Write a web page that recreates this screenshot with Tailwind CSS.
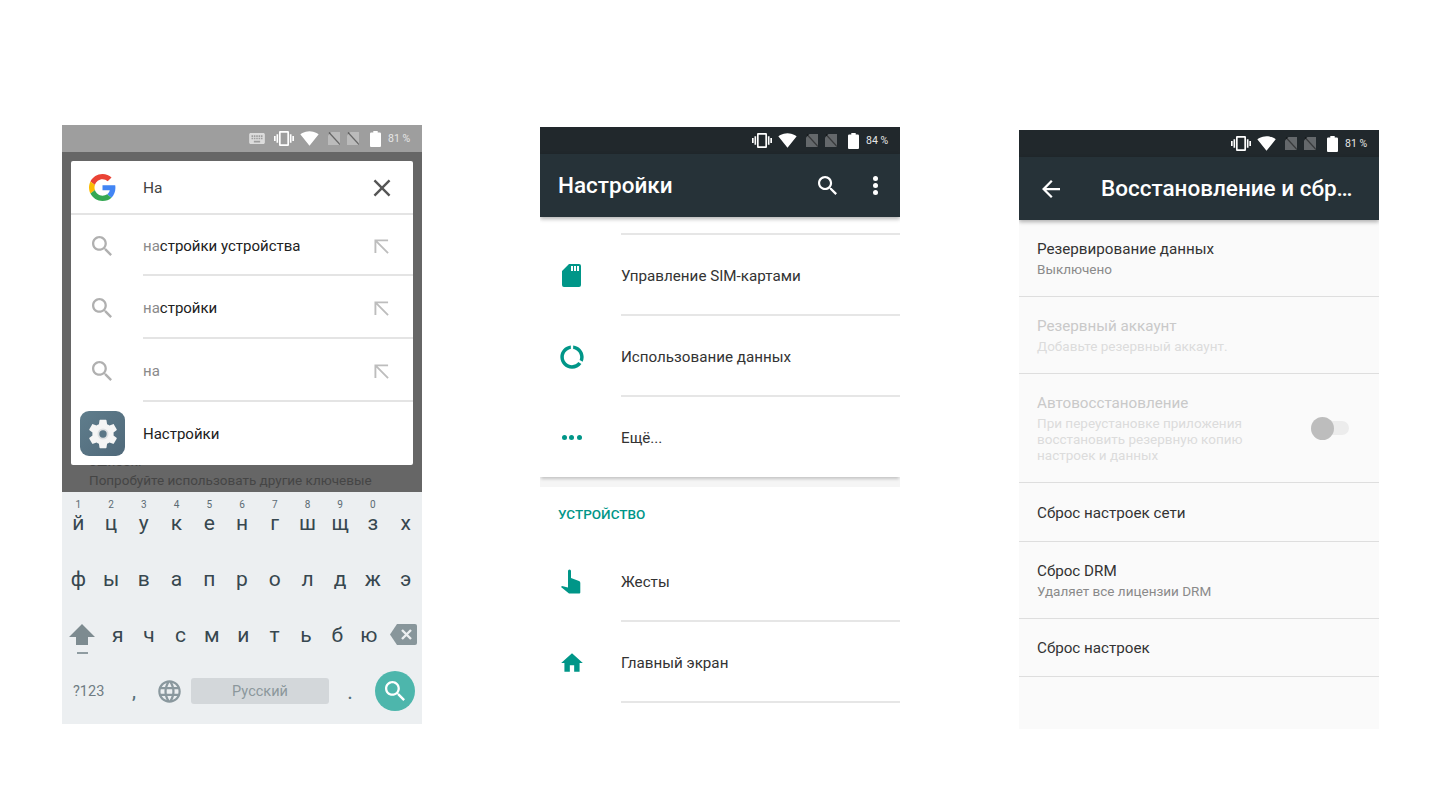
<!DOCTYPE html>
<html lang="ru">
<head>
  <meta charset="UTF-8">
  <title>Настройки</title>
  <script src="https://cdn.jsdelivr.net/npm/@tailwindcss/browser@4"></script>
</head>
<body class="bg-white font-['Roboto',sans-serif] overflow-hidden">
  <!-- shared icons -->
  <svg class="hidden">
    <symbol id="vib" viewBox="0 3 24 18"><path d="M0 15h2V9H0v6zm3 2h2V7H3v10zm19-8v6h2V9h-2zm-3 8h2V7h-2v10zM16.5 3h-9C6.67 3 6 3.67 6 4.5v15c0 .83.67 1.5 1.5 1.5h9c.83 0 1.5-.67 1.5-1.5v-15c0-.83-.67-1.5-1.5-1.5zM16 19H8V5h8v14z"/></symbol>
    <symbol id="wifi" viewBox="0 3 24 18.5"><path d="M12.01 21.49L23.64 7c-.45-.34-4.93-4-11.64-4C5.28 3 .81 6.66.36 7l11.63 14.49.01.01.01-.01z"/></symbol>
    <symbol id="nosim" viewBox="0 0 12 13"><path d="M3.5 0H12V13H0V3.5z" fill-opacity=".3"/><path d="M1 0.5L12 12.5" stroke="#000" stroke-opacity=".45" stroke-width="1.2" fill="none"/></symbol>
    <symbol id="batt" viewBox="7 2 10 20" preserveAspectRatio="none"><path d="M15.67 4H14V2h-4v2H8.33C7.6 4 7 4.6 7 5.33v15.33C7 21.4 7.6 22 8.33 22h7.33c.74 0 1.34-.6 1.34-1.33V5.33C17 4.6 16.4 4 15.67 4z"/></symbol>
    <symbol id="search" viewBox="3 3 17.5 17.5"><path d="M15.5 14h-.79l-.28-.27C15.41 12.59 16 11.11 16 9.5 16 5.91 13.09 3 9.5 3S3 5.91 3 9.5 5.91 16 9.5 16c1.61 0 3.09-.59 4.23-1.57l.27.28v.79l5 4.99L20.49 19l-4.99-5zm-6 0C7.01 14 5 11.99 5 9.5S7.01 5 9.5 5 14 7.01 14 9.5 11.99 14 9.5 14z"/></symbol>
    <symbol id="nw" viewBox="0 0 16 16"><path d="M1.5 15V1.5H15M1.5 1.5L15 15" fill="none" stroke="currentColor" stroke-width="2"/></symbol>
  </svg>

  <div class="flex items-start pl-[62px]">

    <!-- phone 1: search -->
    <div class="w-[360px] h-[599px] mt-[125px] flex flex-col shrink-0 overflow-hidden">
      <div class="h-[27px] shrink-0 bg-[#9e9e9e] flex items-center justify-end pr-3 text-[#e6e6e6] fill-white">
        <svg class="w-4 h-[11px] fill-[#dcdcdc]" viewBox="2 5 20 14"><path d="M20 5H4c-1.1 0-1.99.9-1.99 2L2 17c0 1.1.9 2 2 2h16c1.1 0 2-.9 2-2V7c0-1.1-.9-2-2-2zm-9 3h2v2h-2V8zm0 3h2v2h-2v-2zM8 8h2v2H8V8zm0 3h2v2H8v-2zm-1 2H5v-2h2v2zm0-3H5V8h2v2zm9 7H8v-2h8v2zm0-4h-2v-2h2v2zm0-3h-2V8h2v2zm3 3h-2v-2h2v2zm0-3h-2V8h2v2z"/></svg>
        <svg class="w-5 h-[15px] ml-[9px]"><use href="#vib"/></svg>
        <svg class="w-[19px] h-[15px] ml-1.5"><use href="#wifi"/></svg>
        <svg class="w-3 h-[13px] ml-[9px]"><use href="#nosim"/></svg>
        <svg class="w-3 h-[13px] ml-[7px]"><use href="#nosim"/></svg>
        <svg class="w-[11px] h-4 ml-[11px]"><use href="#batt"/></svg>
        <span class="ml-[7px] text-[10.5px] w-[22px] whitespace-nowrap">81 %</span>
      </div>

      <div class="h-[340px] shrink-0 bg-[#666666] pt-[9px] overflow-hidden">
        <div class="relative z-10 w-[342px] h-[304px] ml-[9px] bg-white rounded-[2px] flex flex-col text-[15px] text-[#212121]">
          <div class="h-[54px] shrink-0 flex items-center border-b-2 border-[#e4e4e4]">
            <svg class="w-[27px] h-[27px] ml-[18px]" viewBox="0 0 48 48">
              <path fill="#EA4335" d="M24 9.5c3.54 0 6.71 1.22 9.21 3.6l6.85-6.85C35.9 2.38 30.47 0 24 0 14.62 0 6.51 5.38 2.56 13.22l7.98 6.19C12.43 13.72 17.74 9.5 24 9.5z"/>
              <path fill="#4285F4" d="M46.98 24.55c0-1.57-.15-3.09-.38-4.55H24v9.02h12.94c-.58 2.96-2.26 5.48-4.78 7.18l7.73 6c4.51-4.18 7.09-10.36 7.09-17.65z"/>
              <path fill="#FBBC05" d="M10.53 28.59c-.48-1.45-.76-2.99-.76-4.59s.27-3.14.76-4.59l-7.98-6.19C.92 16.46 0 20.12 0 24c0 3.88.92 7.54 2.56 10.78l7.97-6.19z"/>
              <path fill="#34A853" d="M24 48c6.48 0 11.93-2.13 15.89-5.81l-7.73-6c-2.15 1.45-4.92 2.3-8.16 2.3-6.26 0-11.57-4.22-13.47-9.91l-7.98 6.19C6.51 42.62 14.62 48 24 48z"/>
            </svg>
            <span class="ml-[27px] flex-1 pt-[3px] text-[15.5px] text-[#424242]">На</span>
            <svg class="w-6 h-6 mr-[19px] mt-0.5 fill-[#555555]" viewBox="2 2 20 20"><path d="M19 6.41L17.59 5 12 10.59 6.41 5 5 6.41 10.59 12 5 17.59 6.41 19 12 13.41 17.59 19 19 17.59 13.41 12z"/></svg>
          </div>
          <div class="h-[61px] shrink-0 flex items-center">
            <svg class="w-5 h-5 ml-[21px] fill-[#b0b0b0]"><use href="#search"/></svg>
            <div class="ml-[31px] flex-1 h-full pt-[3px] flex items-center justify-between border-b-2 border-[#e4e4e4] pr-6">
              <span><span class="text-[#8a8a8a]">на</span>стройки устройства</span>
              <svg class="w-[15px] h-[15px] text-[#bdbdbd]"><use href="#nw"/></svg>
            </div>
          </div>
          <div class="h-[63px] shrink-0 flex items-center">
            <svg class="w-5 h-5 ml-[21px] fill-[#b0b0b0]"><use href="#search"/></svg>
            <div class="ml-[31px] flex-1 h-full pt-[3px] flex items-center justify-between border-b-2 border-[#e4e4e4] pr-6">
              <span><span class="text-[#8a8a8a]">на</span>стройки</span>
              <svg class="w-[15px] h-[15px] text-[#bdbdbd]"><use href="#nw"/></svg>
            </div>
          </div>
          <div class="h-[63px] shrink-0 flex items-center">
            <svg class="w-5 h-5 ml-[21px] fill-[#b0b0b0]"><use href="#search"/></svg>
            <div class="ml-[31px] flex-1 h-full pt-[3px] flex items-center justify-between border-b-2 border-[#e4e4e4] pr-6">
              <span class="text-[#8a8a8a]">на</span>
              <svg class="w-[15px] h-[15px] text-[#bdbdbd]"><use href="#nw"/></svg>
            </div>
          </div>
          <div class="h-[63px] shrink-0 flex items-center">
            <div class="w-[45px] h-[45px] ml-[9px] rounded-[9px] bg-gradient-to-br from-[#5f7d8c] to-[#50697a] flex items-center justify-center">
              <svg class="w-[34px] h-[34px]" viewBox="0 0 24 24"><path fill="#f5f5f5" d="M19.43 12.98c.04-.32.07-.64.07-.98s-.03-.66-.07-.98l2.11-1.65c.19-.15.24-.42.12-.64l-2-3.46c-.12-.22-.39-.3-.61-.22l-2.49 1c-.52-.4-1.08-.73-1.69-.98l-.38-2.65C14.46 2.18 14.25 2 14 2h-4c-.25 0-.46.18-.49.42l-.38 2.65c-.61.25-1.17.59-1.69.98l-2.49-1c-.23-.09-.49 0-.61.22l-2 3.46c-.13.22-.07.49.12.64l2.11 1.65c-.04.32-.07.65-.07.98s.03.66.07.98l-2.11 1.65c-.19.15-.24.42-.12.64l2 3.46c.12.22.39.3.61.22l2.49-1c.52.4 1.08.73 1.69.98l.38 2.65c.03.24.24.42.49.42h4c.25 0 .46-.18.49-.42l.38-2.65c.61-.25 1.17-.59 1.69-.98l2.49 1c.23.09.49 0 .61-.22l2-3.46c.12-.22.07-.49-.12-.64l-2.11-1.65z"/><circle cx="12" cy="12" r="3.9" fill="#dcdfe1"/><circle cx="12" cy="12" r="2.6" fill="#5a7686"/></svg>
            </div>
            <span class="ml-[18px] pt-0.5">Настройки</span>
          </div>
        </div>
        <div class="-mt-[13px] pl-[27px] text-[13.5px] leading-[19px] text-[#454545]">
          <div>ошибок.</div>
          <div>Попробуйте использовать другие ключевые</div>
        </div>
      </div>

      <!-- keyboard -->
      <div class="flex-1 bg-[#eceff1] text-[#37474f] text-[21px]">
        <div class="h-[59px] pt-[7px] grid grid-cols-11 text-center">
          <div class="flex flex-col"><span class="text-[10px] leading-3 text-[#5b6b73]">1</span><span class="leading-6">й</span></div>
          <div class="flex flex-col"><span class="text-[10px] leading-3 text-[#5b6b73]">2</span><span class="leading-6">ц</span></div>
          <div class="flex flex-col"><span class="text-[10px] leading-3 text-[#5b6b73]">3</span><span class="leading-6">у</span></div>
          <div class="flex flex-col"><span class="text-[10px] leading-3 text-[#5b6b73]">4</span><span class="leading-6">к</span></div>
          <div class="flex flex-col"><span class="text-[10px] leading-3 text-[#5b6b73]">5</span><span class="leading-6">е</span></div>
          <div class="flex flex-col"><span class="text-[10px] leading-3 text-[#5b6b73]">6</span><span class="leading-6">н</span></div>
          <div class="flex flex-col"><span class="text-[10px] leading-3 text-[#5b6b73]">7</span><span class="leading-6">г</span></div>
          <div class="flex flex-col"><span class="text-[10px] leading-3 text-[#5b6b73]">8</span><span class="leading-6">ш</span></div>
          <div class="flex flex-col"><span class="text-[10px] leading-3 text-[#5b6b73]">9</span><span class="leading-6">щ</span></div>
          <div class="flex flex-col"><span class="text-[10px] leading-3 text-[#5b6b73]">0</span><span class="leading-6">з</span></div>
          <div class="flex flex-col"><span class="text-[10px] leading-3">&nbsp;</span><span class="leading-6">х</span></div>
        </div>
        <div class="h-14 pt-0.5 grid grid-cols-11 items-center text-center">
          <span>ф</span><span>ы</span><span>в</span><span>а</span><span>п</span><span>р</span><span>о</span><span>л</span><span>д</span><span>ж</span><span>э</span>
        </div>
        <div class="h-[58px] grid grid-cols-[40px_repeat(9,31.4px)_37px] items-center text-center">
          <div class="flex flex-col items-center mt-1.5">
            <svg class="w-[26px] h-[21px] fill-[#7d8b90]" viewBox="0 0 26 21"><path d="M13 0L26 13H19V21H7V13H0z"/></svg>
            <div class="w-[11px] h-0.5 bg-[#8f9ca1] mt-[7px]"></div>
          </div>
          <span>я</span><span>ч</span><span>с</span><span>м</span><span>и</span><span>т</span><span>ь</span><span>б</span><span>ю</span>
          <div class="flex justify-center mb-1">
            <svg class="w-[27px] h-[21px]" viewBox="0 0 27 21"><path fill="#88969b" d="M7 0H25a2 2 0 0 1 2 2V19a2 2 0 0 1-2 2H7L0 10.5z"/><path d="M12 6L21 15M21 6L12 15" stroke="#eceff1" stroke-width="2.4" fill="none"/></svg>
          </div>
        </div>
        <div class="h-[52px] flex items-center">
          <span class="w-[54px] pl-[11px] pt-0.5 text-[14.5px] text-[#6f7c83] whitespace-nowrap">?123</span>
          <span class="w-[36px] text-center text-[18px] font-medium text-[#546e7a]">,</span>
          <svg class="w-[27px] h-[27px] ml-[4px] fill-[#8a989e]" viewBox="0 0 24 24"><path d="M11.99 2C6.47 2 2 6.48 2 12s4.47 10 9.99 10C17.52 22 22 17.52 22 12S17.52 2 11.99 2zm6.93 6h-2.95c-.32-1.25-.78-2.45-1.38-3.56 1.84.63 3.37 1.91 4.33 3.56zM12 4.04c.83 1.2 1.48 2.53 1.91 3.96h-3.82c.43-1.43 1.08-2.76 1.91-3.96zM4.26 14C4.1 13.36 4 12.69 4 12s.1-1.36.26-2h3.38c-.08.66-.14 1.32-.14 2 0 .68.06 1.34.14 2H4.26zm.82 2h2.95c.32 1.25.78 2.45 1.38 3.56-1.84-.63-3.37-1.9-4.33-3.56zm2.95-8H5.08c.96-1.66 2.49-2.93 4.33-3.56C8.81 5.55 8.35 6.75 8.03 8zM12 19.96c-.83-1.2-1.48-2.53-1.91-3.96h3.82c-.43 1.43-1.08 2.76-1.91 3.96zM14.34 14H9.66c-.09-.66-.16-1.32-.16-2 0-.68.07-1.35.16-2h4.68c.09.65.16 1.32.16 2 0 .68-.07 1.34-.16 2zm.25 5.56c.6-1.11 1.06-2.31 1.38-3.56h2.95c-.96 1.65-2.49 2.93-4.33 3.56zM16.36 14c.08-.66.14-1.32.14-2 0-.68-.06-1.34-.14-2h3.38c.16.64.26 1.31.26 2s-.1 1.36-.26 2h-3.38z"/></svg>
          <div class="w-[138px] h-[26px] ml-[8px] pt-0.5 rounded-[3px] bg-[#d3d7da] flex items-center justify-center text-[14.5px] text-[#8c979c]">Русский</div>
          <span class="w-[42px] text-center text-[18px] font-medium text-[#546e7a] mt-[3px]">.</span>
          <div class="w-10 h-10 ml-[4px] rounded-full bg-[#4db6ac] flex items-center justify-center">
            <svg class="w-5 h-5 fill-white"><use href="#search"/></svg>
          </div>
        </div>
      </div>
    </div>

    <!-- phone 2: settings -->
    <div class="w-[360px] h-[600px] mt-[127px] ml-[118px] flex flex-col shrink-0 bg-white overflow-hidden">
      <div class="h-[27px] shrink-0 bg-[#21282c] flex items-center justify-end pr-3 text-[#e6e6e6] fill-white">
        <svg class="w-5 h-[15px]"><use href="#vib"/></svg>
        <svg class="w-[19px] h-[15px] ml-1.5"><use href="#wifi"/></svg>
        <svg class="w-3 h-[13px] ml-[9px]"><use href="#nosim"/></svg>
        <svg class="w-3 h-[13px] ml-[7px]"><use href="#nosim"/></svg>
        <svg class="w-[11px] h-4 ml-[11px]"><use href="#batt"/></svg>
        <span class="ml-[7px] text-[10.5px] w-[22px] whitespace-nowrap">84 %</span>
      </div>
      <div class="relative z-10 h-[63px] shrink-0 bg-[#263238] flex items-center pl-[18px] text-white shadow-[0_2px_4px_rgba(0,0,0,0.3)]">
        <span class="flex-1 text-[22.5px] font-medium">Настройки</span>
        <svg class="w-[19px] h-[19px] fill-white"><use href="#search"/></svg>
        <div class="ml-[36px] mr-[22px] flex flex-col gap-[2px]">
          <div class="w-[5px] h-[5px] rounded-full bg-white"></div>
          <div class="w-[5px] h-[5px] rounded-full bg-white"></div>
          <div class="w-[5px] h-[5px] rounded-full bg-white"></div>
        </div>
      </div>
      <div class="h-[18px] shrink-0 ml-[81px] border-b-2 border-[#e6e6e6]"></div>
      <div class="h-[81px] shrink-0 flex items-center text-[15.2px] text-[#333333]">
        <div class="w-[63px] flex justify-center">
          <svg class="w-[19px] h-[23px]" viewBox="0 0 19 23" fill-rule="evenodd"><path fill="#009688" d="M7 0H17a2 2 0 0 1 2 2V21a2 2 0 0 1-2 2H2a2 2 0 0 1-2-2V7zM9 2V7H11V2zM12 2V7H14V2zM15 2V7H17V2z"/></svg>
        </div>
        <div class="ml-[18px] flex-1 h-full pt-[3px] flex items-center border-b-2 border-[#e6e6e6]">Управление SIM-картами</div>
      </div>
      <div class="h-[81px] shrink-0 flex items-center text-[15.2px] text-[#333333]">
        <div class="w-[63px] flex justify-center">
          <svg class="w-7 h-7 fill-[#009688]" viewBox="0 0 24 24"><path d="M13 2.05v3.03c3.39.49 6 3.39 6 6.92 0 .9-.18 1.75-.48 2.54l2.6 1.53c.56-1.24.88-2.62.88-4.07 0-5.18-3.95-9.45-9-9.95zM12 19c-3.87 0-7-3.13-7-7 0-3.53 2.61-6.43 6-6.92V2.05c-5.06.5-9 4.76-9 9.95 0 5.52 4.47 10 9.99 10 3.31 0 6.24-1.61 8.06-4.09l-2.6-1.53C16.17 17.98 14.21 19 12 19z"/></svg>
        </div>
        <div class="ml-[18px] flex-1 h-full pt-[3px] flex items-center border-b-2 border-[#e6e6e6]">Использование данных</div>
      </div>
      <div class="relative z-[1] h-[80px] shrink-0 flex items-center text-[15.2px] text-[#333333] bg-white shadow-[0_3px_3px_-1px_rgba(0,0,0,0.2)]">
        <div class="w-[63px] flex justify-center gap-[2.5px]">
          <div class="w-[5px] h-[5px] rounded-full bg-[#009688]"></div>
          <div class="w-[5px] h-[5px] rounded-full bg-[#009688]"></div>
          <div class="w-[5px] h-[5px] rounded-full bg-[#009688]"></div>
        </div>
        <div class="ml-[18px] pt-0.5">Ещё...</div>
      </div>
      <div class="h-2.5 shrink-0 bg-[#f5f5f5]"></div>
      <div class="h-[54px] shrink-0 pl-[18px] flex items-center text-[13.5px] font-medium text-[#009688]">УСТРОЙСТВО</div>
      <div class="h-[81px] shrink-0 flex items-center text-[15.2px] text-[#333333]">
        <div class="w-[63px] flex justify-center">
          <svg class="w-6 h-7 fill-[#009688]" viewBox="0 0 24 28"><path d="M8 3a1.5 1.5 0 0 1 3 0V10L19 13a2 2 0 0 1 1.300 2V24.500a1 1 0 0 1-1 1H9L1 19L2 18L8 19.500z"/></svg>
        </div>
        <div class="ml-[18px] flex-1 h-full pt-[3px] flex items-center border-b-2 border-[#e6e6e6]">Жесты</div>
      </div>
      <div class="h-[81px] shrink-0 flex items-center text-[15.2px] text-[#333333]">
        <div class="w-[63px] flex justify-center">
          <svg class="w-[26px] h-[26px] fill-[#009688]" viewBox="0 0 24 24"><path d="M10 20v-6h4v6h5v-8h3L12 3 2 12h3v8z"/></svg>
        </div>
        <div class="ml-[18px] flex-1 h-full pt-[3px] flex items-center border-b-2 border-[#e6e6e6]">Главный экран</div>
      </div>
    </div>

    <!-- phone 3: backup and reset -->
    <div class="w-[360px] h-[599px] mt-[130px] ml-[119px] flex flex-col shrink-0 bg-[#fafafa] overflow-hidden">
      <div class="h-[27px] shrink-0 bg-[#21282c] flex items-center justify-end pr-3 text-[#e6e6e6] fill-white">
        <svg class="w-5 h-[15px]"><use href="#vib"/></svg>
        <svg class="w-[19px] h-[15px] ml-1.5"><use href="#wifi"/></svg>
        <svg class="w-3 h-[13px] ml-[9px]"><use href="#nosim"/></svg>
        <svg class="w-3 h-[13px] ml-[7px]"><use href="#nosim"/></svg>
        <svg class="w-[11px] h-4 ml-[11px]"><use href="#batt"/></svg>
        <span class="ml-[7px] text-[10.5px] w-[22px] whitespace-nowrap">81 %</span>
      </div>
      <div class="relative z-10 h-[63px] shrink-0 bg-[#263238] flex items-center text-white shadow-[0_2px_4px_rgba(0,0,0,0.3)]">
        <svg class="w-[18px] h-[18px] ml-[23px] fill-white" viewBox="4 4 16 16"><path d="M20 11H7.830l5.590-5.590L12 4l-8 8 8 8 1.410-1.410L7.830 13H20v-2z"/></svg>
        <span class="ml-[41px] text-[22.5px] font-medium whitespace-nowrap">Восстановление и сбр…</span>
      </div>
      <div class="h-[77px] shrink-0 px-[18px] flex flex-col justify-center border-b border-[#dedede] pt-[2px]">
        <div class="text-[15.2px] leading-5 text-[#333333]">Резервирование данных</div>
        <div class="text-[13.5px] leading-5 text-[#8a8a8a]">Выключено</div>
      </div>
      <div class="h-[77px] shrink-0 px-[18px] flex flex-col justify-center border-b border-[#dedede] pt-[2px]">
        <div class="text-[15.2px] leading-5 text-[#c9c9c9]">Резервный аккаунт</div>
        <div class="text-[13.5px] leading-5 text-[#dcdcdc]">Добавьте резервный аккаунт.</div>
      </div>
      <div class="h-[109px] shrink-0 pl-[18px] pr-[30px] flex items-center border-b border-[#dedede]">
        <div class="flex-1">
          <div class="text-[15.2px] leading-5 text-[#c9c9c9]">Автовосстановление</div>
          <div class="text-[13.5px] leading-4 text-[#dcdcdc] mt-[2px]">При переустановке приложения<br>восстановить резервную копию<br>настроек и данных</div>
        </div>
        <div class="relative w-[38px] h-[23px] flex items-center">
          <div class="w-full h-[14px] rounded-full bg-[#ececec]"></div>
          <div class="absolute left-0 top-0 w-[23px] h-[23px] rounded-full bg-[#bdbdbd]"></div>
        </div>
      </div>
      <div class="h-[59px] shrink-0 px-[18px] pt-0.5 flex items-center border-b border-[#dedede] text-[15.2px] text-[#333333]">Сброс настроек сети</div>
      <div class="h-[77px] shrink-0 px-[18px] flex flex-col justify-center border-b border-[#dedede] pt-[2px]">
        <div class="text-[15.2px] leading-5 text-[#333333]">Сброс DRM</div>
        <div class="text-[13.5px] leading-5 text-[#8a8a8a]">Удаляет все лицензии DRM</div>
      </div>
      <div class="h-[58px] shrink-0 px-[18px] pt-0.5 flex items-center border-b border-[#dedede] text-[15.2px] text-[#333333]">Сброс настроек</div>
    </div>

  </div>
</body>
</html>
